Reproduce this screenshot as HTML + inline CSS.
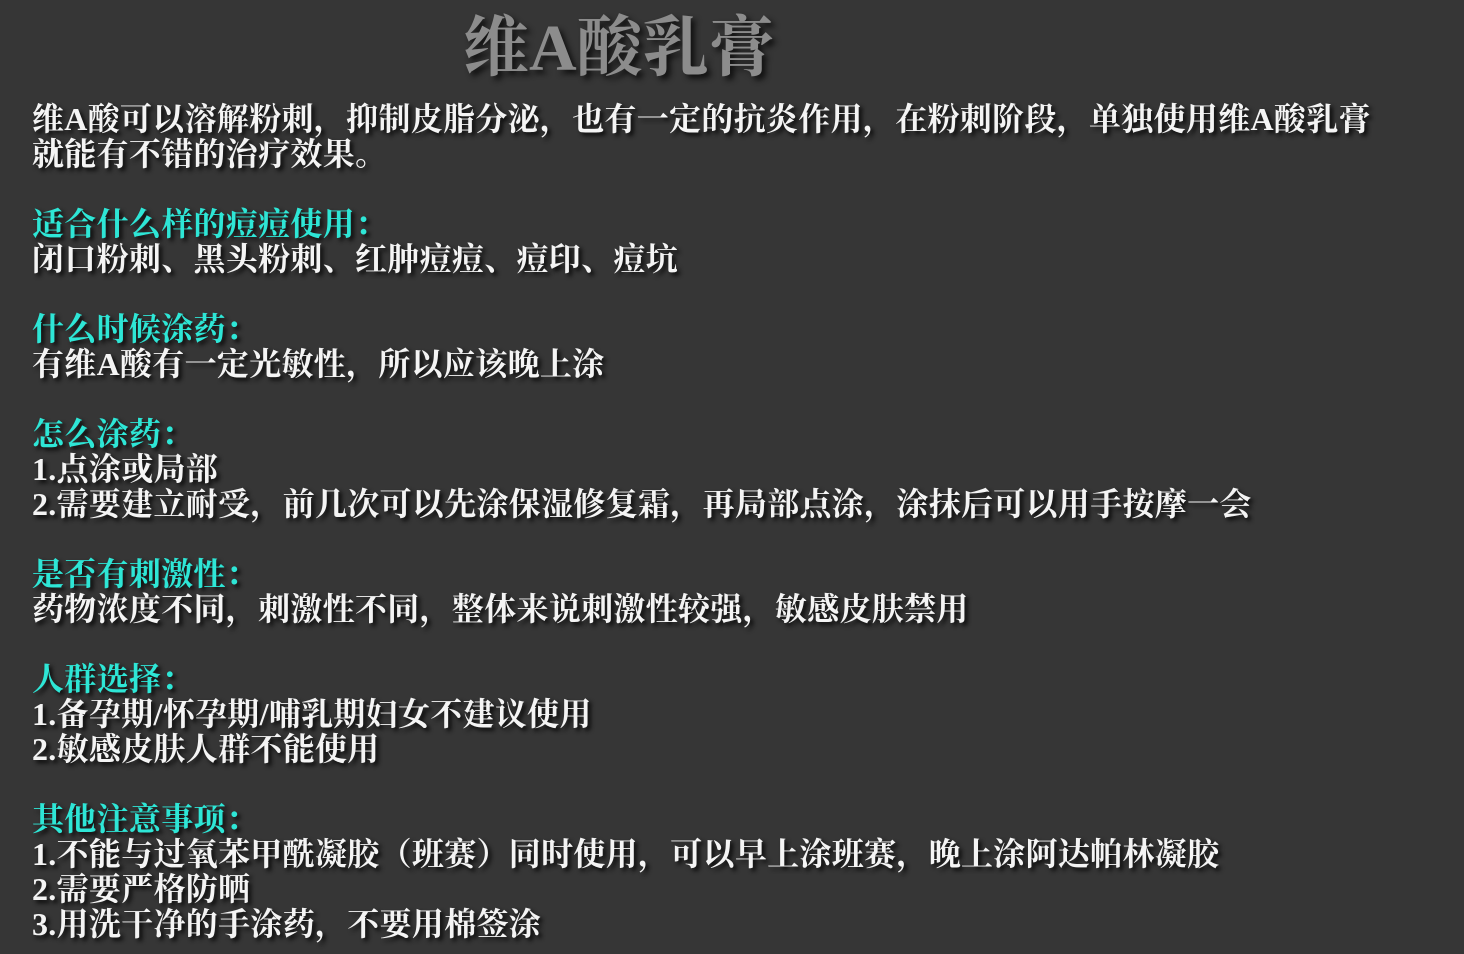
<!DOCTYPE html>
<html><head><meta charset="utf-8"><style>
html,body{margin:0;padding:0;background:#363636;width:1464px;height:954px;overflow:hidden}
body{font-family:"Liberation Serif","Noto Serif CJK SC",serif;font-weight:bold}
.t{position:absolute;left:463px;top:10px;font-size:66px;line-height:78px;color:#8c8c8c;text-shadow:4px 4px 6px #111;letter-spacing:0px}
.c{position:absolute;left:32px;top:102px;font-size:32px;line-height:35px;color:#f4f4f4;text-shadow:3px 3px 4px #0a0a0a;letter-spacing:0.3px;white-space:pre}
.h{color:#2ee6d6}
</style></head><body>
<div class="t">维A酸乳膏</div>
<div class="c">维A酸可以溶解粉刺，抑制皮脂分泌，也有一定的抗炎作用，在粉刺阶段，单独使用维A酸乳膏
就能有不错的治疗效果。

<span class="h">适合什么样的痘痘使用：</span>
闭口粉刺、黑头粉刺、红肿痘痘、痘印、痘坑

<span class="h">什么时候涂药：</span>
有维A酸有一定光敏性，所以应该晚上涂

<span class="h">怎么涂药：</span>
1.点涂或局部
2.需要建立耐受，前几次可以先涂保湿修复霜，再局部点涂，涂抹后可以用手按摩一会

<span class="h">是否有刺激性：</span>
药物浓度不同，刺激性不同，整体来说刺激性较强，敏感皮肤禁用

<span class="h">人群选择：</span>
1.备孕期/怀孕期/哺乳期妇女不建议使用
2.敏感皮肤人群不能使用

<span class="h">其他注意事项：</span>
1.不能与过氧苯甲酰凝胶（班赛）同时使用，可以早上涂班赛，晚上涂阿达帕林凝胶
2.需要严格防晒
3.用洗干净的手涂药，不要用棉签涂</div>
</body></html>
